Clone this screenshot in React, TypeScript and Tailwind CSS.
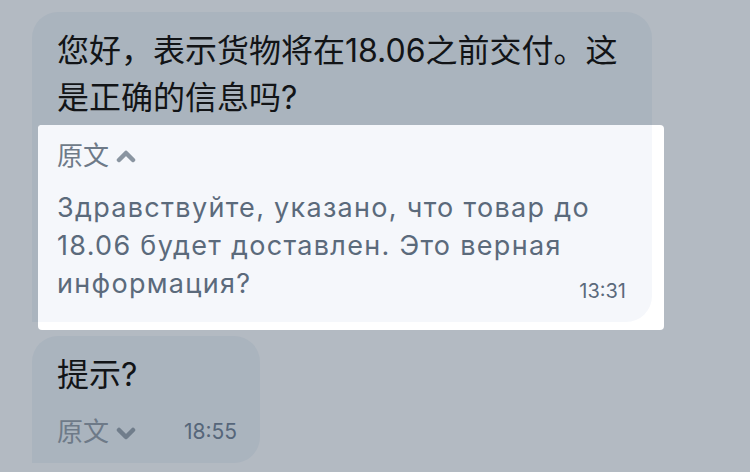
import React from "react";

const FONT = "font-['Inter','Noto_Sans_CJK_SC',sans-serif]";

function Chevron({ up, color }: { up?: boolean; color: string }) {
  return (
    <svg width="20" height="14" viewBox="0 0 20 14" className="inline-block">
      <polyline
        points={up ? "3,11 10,4 17,11" : "3,3 10,10 17,3"}
        fill="none"
        stroke={color}
        strokeWidth="4.5"
        strokeLinecap="round"
        strokeLinejoin="round"
      />
    </svg>
  );
}

export default function App() {
  return (
    <div className={`w-[750px] h-[472px] overflow-hidden bg-[#b3bac2] pt-[12px] pl-[32px] ${FONT}`}>
      {/* first message with translation card */}
      <div className="w-[632px]">
        <div className="w-[620px] rounded-t-[26px] bg-[#aab4be] pl-[25px] pt-[15px] pb-[4px] text-[32px] leading-[47px] text-[#121417] whitespace-nowrap">
          您好，表示货物将在18.06之前交付。这
          <br />
          是正确的信息吗?
        </div>
        <div className="flex">
          <div className="w-[6px] h-[197px] bg-[#aab4be]" />
          <div className="w-[626px] h-[205px] rounded-[4px] bg-white">
            <div className="w-[614px] h-[197px] rounded-tl-[4px] rounded-br-[26px] bg-[#f5f7fb] pl-[19px] pr-[26px] pt-[15px]">
              <div className="flex items-center gap-[7px] text-[26px] leading-[32px] text-[#6e7a88]">
                <span>原文</span>
                <Chevron up color="#8a95a1" />
              </div>
              <div className="mt-[17px] flex items-end">
                <p className="w-0 flex-1 text-[27px] leading-[38px] tracking-[1.3px] text-[#5b6a7b] whitespace-nowrap">
                  Здравствуйте, указано, что товар до
                  <br />
                  18.06 будет доставлен. Это верная
                  <br />
                  информация?
                </p>
                <span className="-mb-[2px] text-[20px] leading-[28px] text-[#5b6a7c]">13:31</span>
              </div>
            </div>
          </div>
        </div>
      </div>

      {/* second message */}
      <div className="mt-[6px] w-[228px] rounded-t-[26px] rounded-br-[26px] bg-[#aab4be] pl-[25px] pt-[15px] pb-[15px]">
        <div className="text-[32px] leading-[47px] text-[#121417]">提示?</div>
        <div className="mt-[18px] flex items-center text-[26px] leading-[32px] text-[#6e7a88]">
          <span>原文</span>
          <span className="ml-[7px]">
            <Chevron color="#707d8b" />
          </span>
          <span className="ml-[48px] text-[21px] text-[#56667a]">18:55</span>
        </div>
      </div>
    </div>
  );
}
